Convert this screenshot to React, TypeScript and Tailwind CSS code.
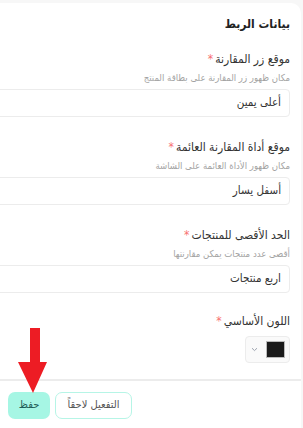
import React from 'react';

type FieldProps = {
  label: string;
  hint: string;
  value: string;
};

function Field({ label, hint, value }: FieldProps) {
  return (
    <div className="flex flex-col">
      <label className="text-[12px] leading-[17px] text-[#333]">
        {label}
        <span className="mr-0.5 text-[#f87171]">*</span>
      </label>
      <p className="mt-[3px] text-[9.5px] leading-[14px] text-[#a3a3a3]">{hint}</p>
      <div className="mt-[4px] flex h-[28px] items-center rounded-[4px] border border-[#ececec] bg-white px-[8px] text-[11.5px] text-[#333]">
        {value}
      </div>
    </div>
  );
}

export default function App() {
  return (
    <div
      dir="rtl"
      className="relative h-[428px] w-[303px] overflow-hidden bg-[#f7f7f7] pt-[3px] pr-[2px]"
      style={{ fontFamily: '"DejaVu Sans Condensed", "DejaVu Sans", sans-serif' }}
    >
      <div className="w-[360px] rounded-tr-[10px] bg-white">
        <div className="pr-[11px] pl-[10px] pt-[12px]">
          <h2 className="text-[12px] font-bold leading-[18px] text-[#222]">بيانات الربط</h2>

          <div className="mt-[18px] flex flex-col gap-[22px]">
            <Field label="موقع زر المقارنة" hint="مكان ظهور زر المقارنة على بطاقة المنتج" value="أعلى يمين" />
            <Field label="موقع أداة المقارنة العائمة" hint="مكان ظهور الأداة العائمة على الشاشة" value="أسفل يسار" />
            <Field label="الحد الأقصى للمنتجات" hint="أقصى عدد منتجات يمكن مقارنتها" value="اربع منتجات" />

            <div className="-mt-[2px] flex flex-col">
              <label className="text-[12px] leading-[17px] text-[#333]">
                اللون الأساسي
                <span className="mr-0.5 text-[#f87171]">*</span>
              </label>
              <div className="mt-[6px] flex h-[27px] w-[45px] items-center gap-[6px] rounded-[4px] border border-[#ececec] bg-[#fafafa] px-[4px]">
                <div className="h-[17px] w-[19px] border border-[#bbb] bg-[#1b1b1b]" />
                <svg width="7" height="5" viewBox="0 0 7 5" className="mr-[2px]">
                  <path d="M1 1.2 L3.5 3.6 L6 1.2" fill="none" stroke="#9ca3af" strokeWidth="1" />
                </svg>
              </div>
            </div>
          </div>
        </div>

        <div className="mt-[16px] border-t-[2px] border-[#ececec]" />

        <div className="flex items-center justify-end gap-[5px] pl-[67px] pt-[11px] pb-[9px]">
          <button className="flex h-[27px] w-[77px] items-center justify-center rounded-[7px] border-[1.5px] border-[#b6f5e6] bg-white text-[11px] text-[#555]">
            التفعيل لاحقاً
          </button>
          <button className="flex h-[27px] w-[42px] items-center justify-center rounded-[7px] bg-[#a6f6e4] text-[11px] text-[#1f5e58]">
            حفظ
          </button>
        </div>
        <div className="border-t border-[#ececec]" />
      </div>

      <svg
        className="pointer-events-none absolute left-[18px] top-[328px]"
        width="30"
        height="66"
        viewBox="0 0 30 66"
      >
        <polygon points="12,0 22,0 22,34 29,34 15,65 0,34 12,34" fill="#ed1c24" />
      </svg>
    </div>
  );
}
